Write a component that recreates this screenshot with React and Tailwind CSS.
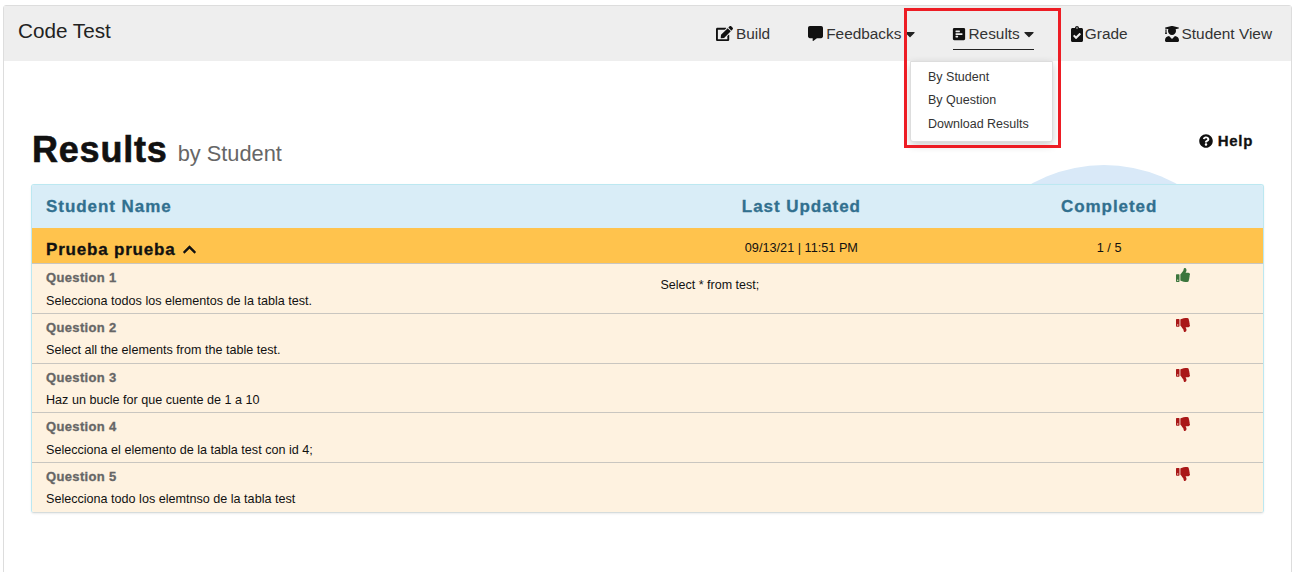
import { FaEdit, FaCommentAlt, FaPollH, FaClipboardCheck, FaUserGraduate, FaQuestionCircle, FaThumbsUp, FaThumbsDown, FaChevronUp, FaCaretDown } from "react-icons/fa";

const QUESTIONS = [
  { title: "Question 1", text: "Selecciona todos los elementos de la tabla test.", answer: "Select * from test;", ok: true, h: "h-[50px]", gap: "mt-[7px]" },
  { title: "Question 2", text: "Select all the elements from the table test.", answer: "", ok: false, h: "h-[50px]", gap: "mt-[6px]" },
  { title: "Question 3", text: "Haz un bucle for que cuente de 1 a 10", answer: "", ok: false, h: "h-[49px]", gap: "mt-[6px]" },
  { title: "Question 4", text: "Selecciona el elemento de la tabla test con id 4;", answer: "", ok: false, h: "h-[50px]", gap: "mt-[7px]" },
  { title: "Question 5", text: "Selecciona todo los elemtnso de la tabla test", answer: "", ok: false, h: "h-[49px]", gap: "mt-[6px]" },
];

// icon svgs are square boxes, so the margins trim the empty sides of narrow glyphs
function NavItem({ icon: Icon, iconSize = 15, iconClass = "mr-[3px]", label, caret, active, className }) {
  return (
    <div className={`flex items-center h-[32px] mt-[12px] border-b ${active ? "border-[#222]" : "border-transparent"} ${className}`}>
      <Icon size={iconSize} className={`text-[#111] ${iconClass}`} />
      <span className="text-[15.4px] text-[#333]">{label}</span>
      {caret && <FaCaretDown size={16} className="text-[#222] ml-[1px] -mr-[3px]" />}
    </div>
  );
}

function QuestionRow({ q }) {
  const Thumb = q.ok ? FaThumbsUp : FaThumbsDown;
  return (
    <div className={`grid grid-cols-[2fr_1fr_1fr] border-b border-[#c9c6c0] last:border-b-0 ${q.h}`}>
      <div className="pl-[14px]">
        <div className="mt-[6px] text-[13px] leading-[16px] font-bold tracking-[0.35px] text-[#666] [-webkit-text-stroke:0.3px]">{q.title}</div>
        <div className={`${q.gap} text-[12.6px] leading-[16px] text-[#111]`}>{q.text}</div>
      </div>
      <div className="pl-[13px] pt-[13px] text-[12.5px] leading-[16px] text-[#111]">{q.answer}</div>
      <div className="pl-[221px] pt-[4px]">
        <Thumb size={14} className={q.ok ? "text-[#3c763d]" : "text-[#a91818]"} />
      </div>
    </div>
  );
}

export default function App() {
  return (
    <div className="relative h-[572px] overflow-hidden bg-white font-['Liberation_Sans',Arial,sans-serif]">
      <div className="ml-[3px] mr-[6px] mt-[5px] h-[600px] border border-[#ddd] rounded-t-[3px]">
        <header className="flex h-[55px] bg-[#eeeeee]">
          <div className="pl-[14px] pt-[11px] text-[20.7px] leading-[28px] text-[#222]">Code Test</div>
          <nav className="ml-auto flex">
            <NavItem icon={FaEdit} iconSize={17} label="Build" className="mr-[38px]" />
            <NavItem icon={FaCommentAlt} label="Feedbacks" caret className="mr-[38px]" />
            <NavItem icon={FaPollH} iconSize={14} iconClass="-ml-[1px] mr-[2px]" label="Results" caret active className="mr-[37px]" />
            <NavItem icon={FaClipboardCheck} iconSize={16} iconClass="-ml-[2px]" label="Grade" className="mr-[37px]" />
            <NavItem icon={FaUserGraduate} iconSize={16} iconClass="-ml-[1px] mr-[2px]" label="Student View" className="mr-[19px]" />
          </nav>
        </header>

        <main className="relative px-[27px]">
          <div className="flex items-end justify-between h-[123px]">
            <h1 className="mb-[12px] ml-[1px] flex items-baseline">
              <span className="text-[36px] leading-[40px] font-bold tracking-[0.8px] text-[#111] [-webkit-text-stroke:0.6px]">Results</span>
              <span className="ml-[10px] -translate-y-px text-[21.8px] text-[#666]">by Student</span>
            </h1>
            <div className="flex items-center gap-[5px] mb-[32px] mr-[11px] text-[15px] font-bold tracking-[0.7px] text-[#111] [-webkit-text-stroke:0.3px]">
              <FaQuestionCircle size={14} />
              Help
            </div>
          </div>

          <div className="absolute left-[950px] top-[104px] h-[300px] w-[300px] rounded-full bg-[#d9e9f8]" />

          <section className="relative w-[1233px] overflow-hidden rounded-[3px] border border-[#bce8f1] border-b-[#d5dcdc] shadow-[0_1px_2px_rgba(0,0,0,0.08)]">
            <div className="grid h-[42px] grid-cols-[2fr_1fr_1fr] items-center bg-[#d9edf7] pt-[2px] text-[17px] font-bold tracking-[0.95px] text-[#31708f] [-webkit-text-stroke:0.3px]">
              <div className="pl-[14px]">Student Name</div>
              <div className="text-center">Last Updated</div>
              <div className="text-center">Completed</div>
            </div>
            <div className="grid h-[37px] grid-cols-[2fr_1fr_1fr] items-center border-y border-[#c9c6c0] border-t-[#d9edf7] bg-[#ffc34d] pt-[6px] text-[12.7px] text-[#111]">
              <div className="flex items-center gap-[7px] pl-[14px] pt-[2px] text-[17px] font-bold tracking-[0.8px] [-webkit-text-stroke:0.3px]">
                Prueba prueba
                <FaChevronUp size={15} />
              </div>
              <div className="text-center">09/13/21 | 11:51 PM</div>
              <div className="text-center">1 / 5</div>
            </div>
            <div className="bg-[#fef2e0]">
              {QUESTIONS.map((q) => (
                <QuestionRow key={q.title} q={q} />
              ))}
            </div>
          </section>
        </main>
      </div>

      <div className="absolute left-[910px] top-[61px] h-[81px] w-[143px] rounded-b-[3px] border border-[#ddd] bg-white pl-[17px] pt-[3.5px] text-[12.5px] leading-[23.5px] text-[#333] shadow-[0_3px_8px_rgba(0,0,0,0.2)]">
        <div>By Student</div>
        <div>By Question</div>
        <div>Download Results</div>
      </div>
      <div className="absolute left-[904px] top-[8px] h-[140px] w-[157px] border-[3px] border-[#ed1c24]" />
    </div>
  );
}
